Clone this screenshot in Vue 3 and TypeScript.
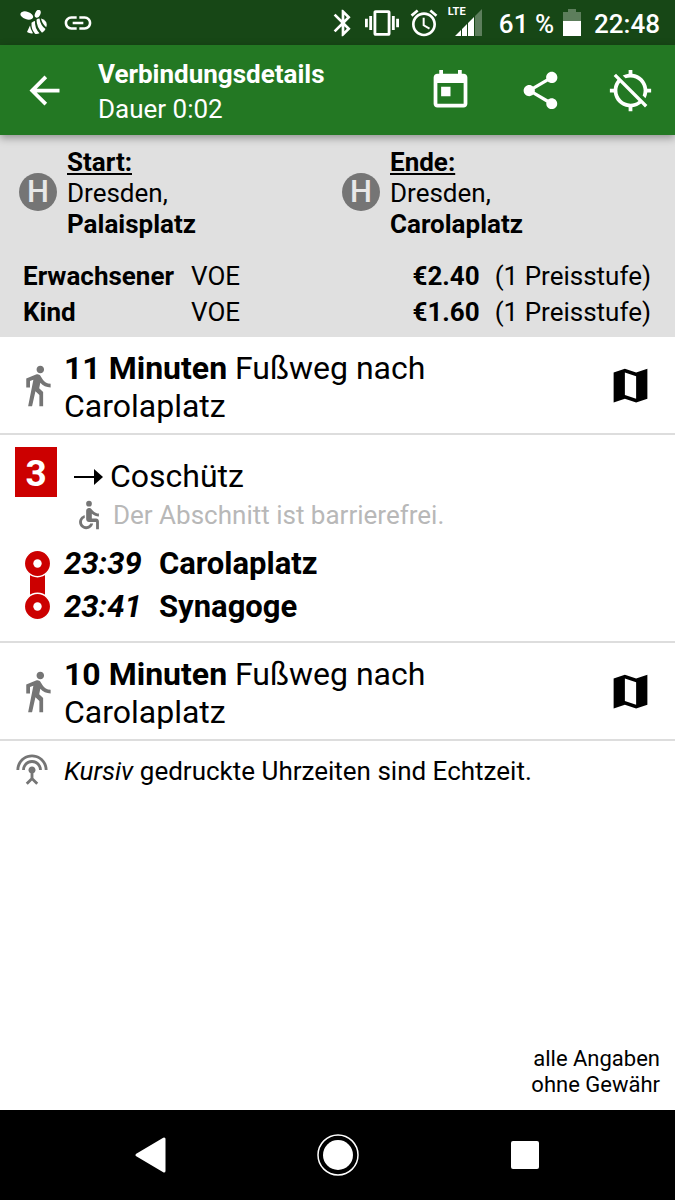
<script setup lang="ts">
interface Stop {
  label: string
  city: string
  name: string
}
interface Fare {
  group: string
  zone: string
  price: string
  level: string
}

const stops: Stop[] = [
  { label: 'Start:', city: 'Dresden,', name: 'Palaisplatz' },
  { label: 'Ende:', city: 'Dresden,', name: 'Carolaplatz' },
]
const fares: Fare[] = [
  { group: 'Erwachsener', zone: 'VOE', price: '€2.40', level: '(1 Preisstufe)' },
  { group: 'Kind', zone: 'VOE', price: '€1.60', level: '(1 Preisstufe)' },
]
const calls = [
  { time: '23:39', name: 'Carolaplatz' },
  { time: '23:41', name: 'Synagoge' },
]
const actions = [
  {
    label: 'Kalender',
    path: 'M19 3h-1V1h-2v2H8V1H6v2H5c-1.11 0-1.99.9-1.99 2L3 19c0 1.1.89 2 2 2h14c1.1 0 2-.9 2-2V5c0-1.1-.9-2-2-2zm0 16H5V8h14v11zM7 10h5v5H7v-5z',
  },
  {
    label: 'Teilen',
    path: 'M18 16.08c-.76 0-1.44.3-1.96.77L8.91 12.7c.05-.23.09-.46.09-.7s-.04-.47-.09-.7l7.05-4.11c.54.5 1.25.81 2.04.81 1.66 0 3-1.34 3-3s-1.34-3-3-3-3 1.34-3 3c0 .24.04.47.09.7L8.04 9.81C7.5 9.31 6.79 9 6 9c-1.66 0-3 1.34-3 3s1.34 3 3 3c.79 0 1.5-.31 2.04-.81l7.12 4.16c-.05.21-.08.43-.08.65 0 1.61 1.31 2.92 2.92 2.92s2.92-1.31 2.92-2.92-1.31-2.92-2.92-2.92z',
  },
  {
    label: 'Ortung aus',
    path: 'M20.94 11c-.46-4.17-3.77-7.48-7.94-7.94V1h-2v2.06c-1.13.12-2.19.46-3.16.97l1.5 1.5C10.16 5.19 11.06 5 12 5c3.87 0 7 3.13 7 7 0 .94-.19 1.84-.52 2.65l1.5 1.5c.5-.96.84-2.02.97-3.15H23v-2h-2.06zM3 4.27l2.04 2.04C3.97 7.62 3.25 9.23 3.06 11H1v2h2.06c.46 4.17 3.77 7.48 7.94 7.94V23h2v-2.06c1.77-.2 3.38-.91 4.69-1.98L19.73 21 21 19.73 4.27 3 3 4.27zm13.27 13.27C15.09 18.45 13.61 19 12 19c-3.87 0-7-3.13-7-7 0-1.61.55-3.09 1.46-4.27l9.81 9.81z',
  },
]
const walkPath =
  'M13.5 5.5c1.1 0 2-.9 2-2s-.9-2-2-2-2 .9-2 2 .9 2 2 2zM9.8 8.9L7 23h2.1l1.8-8 2.1 2v6h2v-7.5l-2.1-2 .6-3C14.8 12 16.8 13 19 13v-2c-1.9 0-3.5-1-4.3-2.4l-1-1.6c-.4-.6-1-1-1.7-1-.3 0-.5.1-.8.1L6 8.3V13h2V9.6l1.8-.7'
const mapPath = 'M3 5L9 3L15 5L21 3V19L15 21L9 19L3 21ZM9 5V17L15 19V7Z'
</script>

<template>
  <div class="screen">
    <div class="status">
      <svg class="bee" viewBox="0 0 28 26" fill="#fff">
        <ellipse cx="6.8" cy="5.5" rx="6.6" ry="3.8" transform="rotate(18 6.8 5.5)" />
        <ellipse cx="17.7" cy="3.8" rx="2.6" ry="4.2" transform="rotate(25 17.7 3.8)" />
        <path d="M10 15.5L7 22Q9.5 23.8 13 23.3Q10.5 19.500 10 15.500Z" />
        <path d="M11.500 12.800Q13.500 11 15 11Q14.500 18 19.500 23.300Q17 24.300 15 23.800Q11 19 11.500 12.800Z" />
        <path d="M16.500 9.800Q16.500 17 22 22.700Q24.500 21.500 25.500 19Q20.500 15.500 19.500 8.500Q17.500 8.500 16.500 9.800Z" />
        <path d="M21 8.500Q22 13.500 26.200 17.300Q28.500 11 21 8.500Z" />
      </svg>
      <svg class="sys" viewBox="0 0 24 24" fill="#fff">
        <path d="M3.900 12c0-1.710 1.390-3.100 3.100-3.100h4V7H7c-2.760 0-5 2.240-5 5s2.240 5 5 5h4v-1.900H7c-1.710 0-3.100-1.390-3.100-3.100zM8 13h8v-2H8v2zm9-6h-4v1.900h4c1.710 0 3.100 1.390 3.100 3.100s-1.390 3.100-3.100 3.100h-4V17h4c2.760 0 5-2.240 5-5s-2.240-5-5-5z" />
      </svg>
      <span class="grow"></span>
      <svg class="sys bt" viewBox="0 0 24 24" fill="#fff">
        <path d="M17.710 7.710L12 2h-1v7.590L6.410 5 5 6.410 10.590 12 5 17.590 6.410 19 11 14.410V22h1l5.710-5.710-4.300-4.290 4.300-4.290zM13 5.830l1.880 1.880L13 9.590V5.830zm1.880 10.460L13 18.170v-3.760l1.880 1.880z" />
      </svg>
      <svg class="vib" viewBox="0 0 24 24" fill="#fff">
        <path d="M0 15h2V9H0v6zm3 2h2V7H3v10zm19-8v6h2V9h-2zm-3 8h2V7h-2v10zM16.500 3h-9C6.670 3 6 3.670 6 4.500v15c0 .83.67 1.500 1.500 1.500h9c.83 0 1.500-.67 1.500-1.500v-15c0-.83-.67-1.500-1.500-1.500zM16 19H8V5h8v14z" />
      </svg>
      <svg class="sys alarm" viewBox="0 0 24 24" fill="#fff">
        <path d="M22 5.720l-4.600-3.860-1.290 1.530 4.600 3.860L22 5.720zM7.880 3.390L6.600 1.860 2 5.710l1.290 1.530 4.590-3.850zM12.500 8H11v6l4.750 2.850.75-1.230-4-2.370V8zM12 4c-4.970 0-9 4.030-9 9s4.020 9 9 9c4.970 0 9-4.030 9-9s-4.030-9-9-9zm0 16c-3.870 0-7-3.130-7-7s3.130-7 7-7 7 3.130 7 7-3.130 7-7 7z" />
      </svg>
      <div class="signal">
        <svg viewBox="0 0 27 27">
          <path d="M20 7L27 0V27H20Z" fill="#fff" fill-opacity=".3" />
          <path d="M0 27L6 21V27ZM7 20L12 15V27H7ZM13 14L19 8V27H13Z" fill="#fff" />
        </svg>
        <span class="lte">LTE</span>
      </div>
      <span class="percent">61 %</span>
      <svg class="battery" viewBox="0 0 18 28">
        <path d="M5 0H13V3H18V12H0V3H5Z" fill="#fff" fill-opacity=".3" />
        <path d="M0 12H18V27H0Z" fill="#fff" />
      </svg>
      <span class="clock">22:48</span>
    </div>

    <header class="appbar">
      <button class="tool" type="button" aria-label="Zurück">
        <svg viewBox="0 0 24 24"><path d="M20 11H7.830l5.590-5.590L12 4l-8 8 8 8 1.410-1.410L7.830 13H20v-2z" /></svg>
      </button>
      <div class="titles">
        <h1>Verbindungsdetails</h1>
        <p>Dauer 0:02</p>
      </div>
      <div class="tools">
        <button v-for="a in actions" :key="a.label" class="tool" type="button" :aria-label="a.label">
          <svg viewBox="0 0 24 24"><path :d="a.path" /></svg>
        </button>
      </div>
    </header>

    <section class="summary">
      <div class="ends">
        <div v-for="s in stops" :key="s.label" class="end">
          <span class="badge">H</span>
          <div>
            <div class="label">{{ s.label }}</div>
            <div>{{ s.city }}</div>
            <div><b>{{ s.name }}</b></div>
          </div>
        </div>
      </div>
      <table class="fares">
        <tbody>
          <tr v-for="f in fares" :key="f.group">
            <th scope="row">{{ f.group }}</th>
            <td class="zone">{{ f.zone }}</td>
            <td class="price">{{ f.price }}</td>
            <td class="level">{{ f.level }}</td>
          </tr>
        </tbody>
      </table>
    </section>

    <main>
      <section class="walk">
        <svg class="walker" viewBox="0 0 24 24"><path :d="walkPath" /></svg>
        <p><b>11 Minuten</b> Fußweg nach Carolaplatz</p>
        <button class="map" type="button" aria-label="Karte">
          <svg viewBox="0 0 24 24"><path :d="mapPath" fill-rule="evenodd" /></svg>
        </button>
      </section>

      <section class="ride">
        <div class="heading">
          <span class="line">3</span>
          <div class="direction">
            <svg class="arrow" viewBox="0 0 29 16"><path d="M0 7H20V0L29 8L20 16V9H0Z" /></svg>
            <span>Coschütz</span>
          </div>
        </div>
        <div class="access">
          <svg viewBox="0 0 24 24">
            <circle cx="12" cy="4" r="2" />
            <path d="M19 13v-2c-1.540.02-3.090-.75-4.070-1.830l-1.290-1.430c-.17-.19-.38-.34-.61-.45-.01 0-.01-.01-.02-.01H13c-.35-.2-.75-.3-1.190-.26C10.760 7.110 10 8.040 10 9.090V15c0 1.100.9 2 2 2h5v5h2v-5.500c0-1.100-.9-2-2-2h-3v-3.450c1.290 1.070 3.250 1.940 5 1.950zm-6.170 5c-.41 1.160-1.520 2-2.830 2-1.660 0-3-1.340-3-3 0-1.310.84-2.410 2-2.830V12.100c-2.280.46-4 2.480-4 4.900 0 2.760 2.240 5 5 5 2.420 0 4.440-1.720 4.900-4h-2.070z" />
          </svg>
          <span>Der Abschnitt ist barrierefrei.</span>
        </div>
        <div class="calls">
          <svg class="track" viewBox="0 0 26 86">
            <path d="M5 22H20V64H5Z" fill="#c00" />
            <g fill="#c00" stroke="#fff" stroke-width="1.5">
              <circle cx="12.500" cy="21.500" r="13.200" />
              <circle cx="12.500" cy="64.500" r="13.200" />
            </g>
            <circle cx="12.500" cy="21.500" r="4.200" fill="#fff" />
            <circle cx="12.500" cy="64.500" r="4.200" fill="#fff" />
          </svg>
          <div>
            <div v-for="c in calls" :key="c.time" class="call">
              <time>{{ c.time }}</time>
              <span>{{ c.name }}</span>
            </div>
          </div>
        </div>
      </section>

      <section class="walk">
        <svg class="walker" viewBox="0 0 24 24"><path :d="walkPath" /></svg>
        <p><b>10 Minuten</b> Fußweg nach Carolaplatz</p>
        <button class="map" type="button" aria-label="Karte">
          <svg viewBox="0 0 24 24"><path :d="mapPath" fill-rule="evenodd" /></svg>
        </button>
      </section>

      <div class="legend">
        <svg viewBox="0 0 24 24">
          <path d="M12 5c-3.870 0-7 3.130-7 7h2c0-2.760 2.240-5 5-5s5 2.240 5 5h2c0-3.870-3.130-7-7-7zm1 9.290c.88-.39 1.500-1.260 1.500-2.290 0-1.380-1.120-2.500-2.500-2.500S9.500 10.620 9.500 12c0 1.020.62 1.900 1.500 2.290v3.300L7.590 21 9 22.410l3-3 3 3L16.410 21 13 17.590v-3.300zM12 1C5.930 1 1 5.930 1 12h2c0-4.970 4.030-9 9-9s9 4.030 9 9h2c0-6.070-4.930-11-11-11z" />
        </svg>
        <p><i>Kursiv</i> gedruckte Uhrzeiten sind Echtzeit.</p>
      </div>
    </main>

    <footer class="note">alle Angaben<br />ohne Gewähr</footer>

    <nav class="nav">
      <button type="button" aria-label="Zurück">
        <svg viewBox="0 0 44 44"><path d="M8 22L35 6V38Z" fill="#fff" stroke="#fff" stroke-width="3" stroke-linejoin="round" /></svg>
      </button>
      <button type="button" aria-label="Startbildschirm">
        <svg viewBox="0 0 44 44">
          <circle cx="22" cy="22" r="20" fill="none" stroke="#fff" stroke-width="1.500" />
          <circle cx="22" cy="22" r="15" fill="#fff" />
        </svg>
      </button>
      <button type="button" aria-label="Übersicht">
        <svg viewBox="0 0 44 44"><rect x="8" y="8" width="28" height="28" rx="2" fill="#fff" /></svg>
      </button>
    </nav>
  </div>
</template>

<style>
body {
  margin: 0;
}
</style>

<style scoped>
.screen {
  display: flex;
  flex-direction: column;
  min-height: 100vh;
  background: #fff;
  color: #000;
  font: 26px/31px Roboto, 'Noto Sans', sans-serif;
}
h1,
p {
  margin: 0;
  font-size: inherit;
}
svg {
  display: block;
  flex: none;
}
button {
  padding: 0;
  border: 0;
  background: none;
  cursor: pointer;
}
.status {
  display: flex;
  align-items: center;
  height: 45px;
  padding: 0 15px 0 20px;
  background: #174716;
  color: #fff;
}
.bee {
  width: 28px;
  height: 26px;
  margin-right: 14px;
}
.sys {
  width: 32px;
  height: 32px;
}
.grow {
  flex: 1;
}
.bt {
  margin-right: 6px;
}
.vib {
  width: 34px;
  height: 34px;
  margin-right: 9px;
}
.alarm {
  margin-right: 8px;
}
.signal {
  position: relative;
  width: 34px;
  height: 27px;
  margin-right: 17px;
}
.signal svg {
  width: 27px;
  height: 27px;
  margin-left: auto;
}
.lte {
  position: absolute;
  left: 0;
  top: -3px;
  font-size: 11px;
  font-weight: 700;
  line-height: 12px;
}
.battery {
  width: 18px;
  height: 28px;
  margin: 0 13px 0 9px;
}
.percent,
.clock {
  padding-top: 3px;
  font-weight: 500;
}
.appbar {
  position: relative;
  z-index: 1;
  display: flex;
  align-items: center;
  height: 90px;
  padding: 0 22px;
  background: #237823;
  color: #fff;
  box-shadow: 0 3px 8px rgba(0, 0, 0, 0.35);
}
.tool svg {
  width: 45px;
  height: 45px;
  fill: #fff;
}
.titles {
  flex: 1;
  margin-left: 31px;
  padding-top: 3px;
  line-height: 35px;
}
.tools {
  display: flex;
  gap: 45px;
}
.summary {
  padding: 12px 0 7px;
  background: #e0e0e0;
}
.ends {
  display: grid;
  grid-template-columns: 323px 1fr;
  padding-left: 19px;
}
.end {
  display: flex;
  align-items: center;
  gap: 10px;
}
.badge {
  width: 38px;
  margin-bottom: 4px;
  border-radius: 50%;
  background: #757575;
  color: #e8e8e8;
  font-size: 31px;
  font-weight: 500;
  line-height: 38px;
  text-align: center;
}
.label {
  font-weight: 700;
  text-decoration: underline;
}
.fares {
  width: 100%;
  margin-top: 18px;
  padding: 0 24px 0 23px;
  border-spacing: 0;
  line-height: 36px;
}
.fares th,
.fares td {
  padding: 0;
  text-align: left;
  white-space: nowrap;
}
.fares th,
.fares .level {
  width: 1px;
}
.fares .zone {
  padding-left: 17px;
}
.fares .level {
  padding-left: 15px;
}
.fares .price {
  font-weight: 700;
  text-align: right;
}
main {
  flex: 1;
}
.walk {
  display: flex;
  align-items: center;
  padding: 10px 22px 10px 15px;
  border-bottom: 2px solid #ddd;
  font-size: 32px;
  line-height: 38px;
}
.walker {
  width: 45px;
  height: 45px;
  fill: #757575;
}
.walk p {
  flex: 1;
  max-width: 400px;
  margin: 2px auto 0 4px;
}
.map svg {
  width: 45px;
  height: 45px;
}
.walk p {
  margin-bottom: -2px;
}
.ride {
  padding: 12px 15px 13px;
  border-bottom: 2px solid #ddd;
  font-size: 31px;
}
.heading {
  display: flex;
  gap: 17px;
}
.line {
  width: 42px;
  padding-top: 4px;
  background: #c00;
  color: #fff;
  font-size: 37px;
  font-weight: 700;
  line-height: 46px;
  text-align: center;
}
.direction {
  display: flex;
  align-items: flex-end;
  gap: 7px;
  font-size: 32px;
  line-height: 42px;
}
.arrow {
  width: 29px;
  height: 16px;
  margin-bottom: 12px;
}
.access {
  display: flex;
  align-items: center;
  gap: 7px;
  margin: 1px 0 0 57px;
  color: #b8b8b8;
  font-size: 26px;
}
.access svg {
  width: 34px;
  height: 34px;
  fill: #757575;
}
.calls {
  display: flex;
  margin-top: 10px;
  padding-left: 10px;
  font-weight: 700;
  line-height: 43px;
}
.track {
  width: 26px;
  height: 86px;
  margin-right: 13px;
}
.call {
  display: flex;
}
.call time {
  width: 95px;
  font-style: italic;
}
.legend {
  display: flex;
  align-items: center;
  gap: 15px;
  padding: 12px 15px;
}
.legend svg {
  width: 34px;
  height: 34px;
  fill: #757575;
}
.legend p {
  padding-top: 2px;
}
.note {
  padding: 0 15px 12px;
  font-size: 22px;
  line-height: 26px;
  text-align: right;
}
.nav {
  display: flex;
  justify-content: center;
  align-items: center;
  gap: 143px;
  height: 90px;
  background: #000;
}
.nav svg {
  width: 44px;
  height: 44px;
}
</style>
